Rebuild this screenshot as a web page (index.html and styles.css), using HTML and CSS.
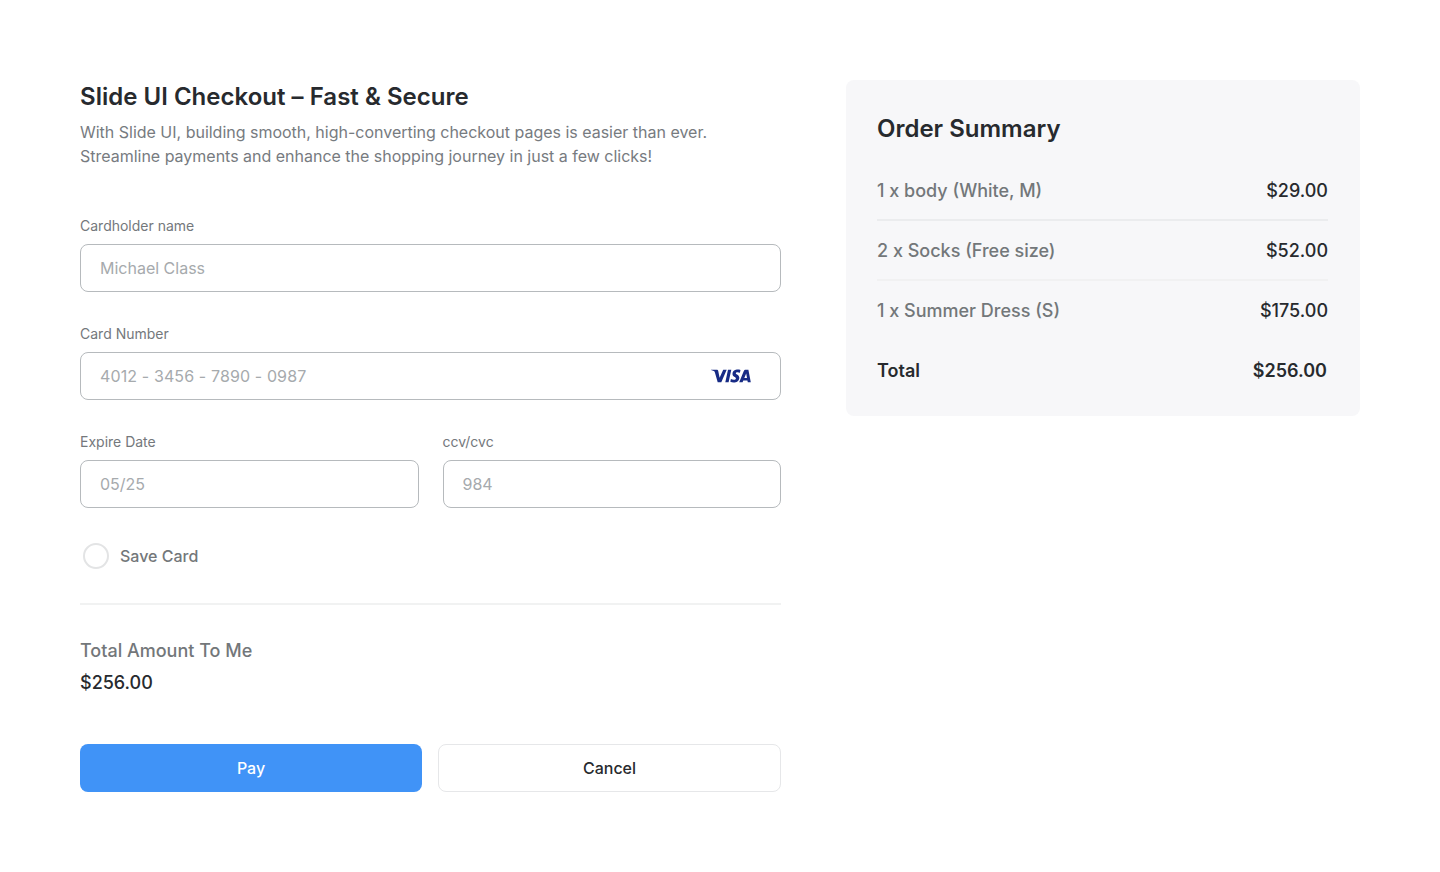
FILE: index.html
```html
<!DOCTYPE html>
<html lang="en">
<head>
<meta charset="utf-8">
<title>Slide UI Checkout</title>
<link rel="stylesheet" href="styles.css">
</head>
<body>
<main class="checkout">
  <form class="payment">
    <h1 class="title">Slide UI Checkout – Fast &amp; Secure</h1>
    <p class="intro">With Slide UI, building smooth, high-converting checkout pages is easier than ever.<br>Streamline payments and enhance the shopping journey in just a few clicks!</p>
    <div class="fields">
      <label class="field"><span class="label">Cardholder name</span><span class="control"><input class="input" type="text" placeholder="Michael Class"></span></label>
      <label class="field"><span class="label">Card Number</span><span class="control"><input class="input card-number" type="text" placeholder="4012 - 3456 - 7890 - 0987">
        <svg class="visa" viewBox="0 0 40 14" width="40" height="14" role="img" aria-label="Visa"><path d="M0 .8h5.600c.9 0 1.500.5 1.700 1.400l1.300 6.600L12.200.8h3.500L10.300 13.300H6.700L3.900 3.400C3.700 2.600 3.400 2.300 2.700 2 1.900 1.600.9 1.300 0 1.100zM17 .8h3.300l-2.700 12.500h-3.300zM29.500 1l-.6 2.700c-1.700-.7-4-.8-4.100.5 0 1.300 3.700 1.500 3.500 4.700-.2 4.500-5.600 5.300-9 3.800l.6-2.800c2 1 4.900 1.100 5-.5.1-1.500-3.600-1.500-3.400-4.600C21.700.7 26.400-.2 29.500 1zM34.700.8h2.700L39.800 13.300h-3l-.4-1.800h-4.100l-.7 1.800h-3.400L32.800 2c.4-.8.900-1.200 1.900-1.200zm.5 3.700-1.900 4.600h2.700z"/></svg></span></label>
      <div class="row">
        <label class="field"><span class="label">Expire Date</span><span class="control"><input class="input" type="text" placeholder="05/25"></span></label>
        <label class="field"><span class="label">ccv/cvc</span><span class="control"><input class="input" type="text" placeholder="984"></span></label>
      </div>
    </div>
    <label class="save"><input class="radio" type="radio"><span>Save Card</span></label>
    <div class="amount"><span class="amount-label">Total Amount To Me</span><strong class="amount-value">$256.00</strong></div>
    <div class="actions"><button class="button pay" type="button">Pay</button><button class="button cancel" type="button">Cancel</button></div>
  </form>
  <aside class="summary">
    <h2 class="summary-title">Order Summary</h2>
    <div class="item ruled"><span class="item-name">1 x body (White, M)</span><span>$29.00</span></div>
    <div class="item ruled faint"><span class="item-name">2 x Socks (Free size)</span><span>$52.00</span></div>
    <div class="item"><span class="item-name">1 x Summer Dress (S)</span><span>$175.00</span></div>
    <div class="item total"><span>Total</span><span>$256.00</span></div>
  </aside>
</main>
</body>
</html>
```

FILE: styles.css
```css
* { box-sizing: border-box; }
body { margin: 0; background: #fff; color: #272a2e; font-family: Inter, "Liberation Sans", sans-serif; }
.checkout { display: flex; align-items: flex-start; justify-content: space-between; padding: 80px; }
.payment { width: 701px; }
.title { margin: 0; padding-top: 1px; font-size: 24px; line-height: 32px; font-weight: 600; letter-spacing: 0.02px; }
.intro { margin: 7px 0 0; font-size: 16px; line-height: 24px; letter-spacing: -0.01px; color: #777b7f; white-space: nowrap; }
.fields { display: flex; flex-direction: column; gap: 32px; margin-top: 48px; }
.row { display: grid; grid-template-columns: 1fr 1fr; gap: 24px; }
.field { display: flex; flex-direction: column; gap: 8px; }
.label { font-size: 14px; line-height: 20px; color: #74787c; }
.control { display: flex; position: relative; }
.input { width: 100%; height: 48px; padding: 0 19px; border: 1px solid #b6babd; border-radius: 8px; background: #fff; font: 400 16px/24px Inter, "Liberation Sans", sans-serif; }
.input::placeholder { color: #a6aaad; opacity: 1; }
.card-number { letter-spacing: 0.12px; }
.visa { position: absolute; right: 30px; top: 17px; fill: #172b85; }
.save { display: flex; align-items: center; gap: 11px; height: 32px; margin-top: 32px; padding-left: 3px; font-size: 16px; font-weight: 500; color: #73777a; }
.radio { appearance: none; width: 26px; height: 26px; margin: 0; border: 2px solid #e3e4e5; border-radius: 50%; }
.amount { display: flex; flex-direction: column; margin-top: 31px; padding-top: 30px; border-top: 2px solid #f1f2f2; }
.amount-label, .amount-value { font-size: 18px; line-height: 32px; font-weight: 500; }
.amount-label { color: #73777a; }
.actions { display: grid; grid-template-columns: 342px 1fr; gap: 16px; margin-top: 45px; }
.button { height: 48px; border-radius: 8px; font: 500 16px/24px Inter, "Liberation Sans", sans-serif; }
.pay { border: 0; background: #4093f7; color: #fff; }
.cancel { border: 1px solid #e6e7e9; background: #fff; color: #272a2e; }
.summary { width: 514px; height: 336px; padding: 33px 32px 31px 31px; border-radius: 8px; background: #f7f7f9; }
.summary-title { margin: 0 0 16px; font-size: 24px; line-height: 32px; font-weight: 600; }
.item { display: flex; justify-content: space-between; align-items: center; height: 60px; border-bottom: 2px solid transparent; font-size: 18px; font-weight: 500; }
.item-name { color: #73777a; }
.ruled { border-color: #ebecee; }
.faint { border-color: #f1f1f2; }
.total { padding-right: 1px; font-weight: 600; }
```
